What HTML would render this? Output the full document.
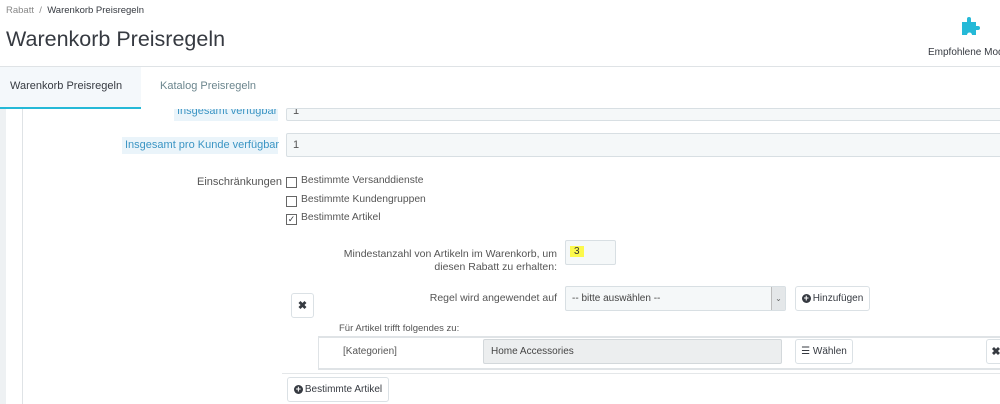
<!DOCTYPE html>
<html><head><meta charset="utf-8"><style>
*{box-sizing:border-box;margin:0;padding:0}
body{width:1000px;height:404px;overflow:hidden;background:#fff;font-family:"Liberation Sans",sans-serif;color:#363a41;position:relative}
.a{position:absolute;white-space:nowrap}
.inp{position:absolute;background:#f5f8f9;border:1px solid #d8dfe3;border-radius:2px;font-size:11px;padding-left:6px;color:#555}
.btn{position:absolute;background:#fff;border:1px solid #dbe1e5;border-radius:3px;font-size:10px;color:#363a41;display:flex;align-items:center;justify-content:center}
.cb{position:absolute;width:11px;height:11px;border:1px solid #666;background:#fff}
.lbl{font-size:10px;color:#555}
.plus{display:inline-block;width:9px;height:9px;border-radius:50%;background:#363a41;color:#fff;font-size:9px;line-height:9px;text-align:center;font-weight:bold;margin-right:2px}
</style></head><body>
<div class="a" style="left:6px;top:5px;font-size:9.5px;color:#888">Rabatt&nbsp; / &nbsp;<span style="color:#363a41">Warenkorb Preisregeln</span></div>
<div class="a" style="left:6px;top:27px;font-size:21.5px;color:#363a41">Warenkorb Preisregeln</div>
<svg class="a" style="left:960px;top:16px" width="22" height="22" viewBox="0 0 22 22"><path d="M2 6h5V3a2 2 0 0 1 4 0v3h5v4h2a2 2 0 0 1 0 4h-2v5h-4a2.5 2.5 0 0 0-5 0H2z" fill="#25b9d7"/></svg>
<div class="a" style="left:928px;top:47px;font-size:10px;color:#363a41">Empfohlene Mod</div>
<div class="a" style="left:0;top:66px;width:1000px;height:1px;background:#dfe3e6"></div>
<div class="a" style="left:0;top:67px;width:141px;height:42px;background:#f4f8fb;border-bottom:2px solid #25b9d7"></div>
<div class="a" style="left:10px;top:80px;font-size:11px;color:#363a41">Warenkorb Preisregeln</div>
<div class="a" style="left:160px;top:80px;font-size:11px;color:#6c868e">Katalog Preisregeln</div>
<div class="a" style="left:0;top:109px;width:6px;height:295px;background:#eef1f3"></div>
<div class="a" style="left:22px;top:109px;width:1px;height:295px;background:#dfe3e6"></div>
<div class="a" style="left:174px;top:109px;width:104px;height:12px;background:#eaf4fa;font-size:11px;color:#3b95c4;padding-left:3px;line-height:4px;overflow:hidden">Insgesamt verfügbar</div>
<div class="inp" style="left:286px;top:108px;width:720px;height:13px;line-height:4px;overflow:hidden">1</div>
<div class="a" style="left:122px;top:137px;width:156px;height:17px;background:#eaf4fa;font-size:11px;color:#3b95c4;line-height:17px;padding-left:3px">Insgesamt pro Kunde verfügbar</div>
<div class="inp" style="left:286px;top:133px;width:720px;height:24px;line-height:22px">1</div>
<div class="a" style="left:197px;top:176px;font-size:11px;color:#555">Einschränkungen</div>
<div class="cb" style="left:286px;top:177px"></div><div class="a lbl" style="left:301px;top:175px;font-size:10.3px">Bestimmte Versanddienste</div>
<div class="cb" style="left:286px;top:196px"></div><div class="a lbl" style="left:301px;top:194px;font-size:10.3px">Bestimmte Kundengruppen</div>
<div class="cb" style="left:286px;top:214px;font-size:9px;line-height:9px;text-align:center">✓</div><div class="a lbl" style="left:301px;top:212px;font-size:10.3px">Bestimmte Artikel</div>
<div class="a lbl" style="left:300px;top:248px;width:257px;text-align:right;line-height:13px;font-size:10.5px">Mindestanzahl von Artikeln im Warenkorb, um<br>diesen Rabatt zu erhalten:</div>
<div class="inp" style="left:565px;top:240px;width:51px;height:25px"><span style="position:absolute;left:4px;top:5px;background:#fcf94c;padding:0 4px;font-size:10px;color:#333">3</span></div>
<div class="btn" style="left:291px;top:293px;width:23px;height:25px;font-size:11px;font-weight:bold">✖</div>
<div class="a lbl" style="left:400px;top:292px;width:157px;text-align:right;font-size:10.5px">Regel wird angewendet auf</div>
<div class="inp" style="left:565px;top:286px;width:221px;height:25px;line-height:23px;font-size:10px;color:#444">-- bitte auswählen --<div style="position:absolute;right:0;top:0;width:14px;height:23px;background:#e4e7e9;border-left:1px solid #bbb;font-size:8px;text-align:center;color:#666">⌄</div></div>
<div class="btn" style="left:795px;top:286px;width:75px;height:25px"><span class="plus">+</span>Hinzufügen</div>
<div class="a lbl" style="left:339px;top:323px;font-size:9.5px">Für Artikel trifft folgendes zu:</div>
<div class="a" style="left:318px;top:336px;width:690px;height:34px;border:1px solid #dfe3e6;border-width:2px 0 2px 1px"></div>
<div class="a lbl" style="left:343px;top:346px">[Kategorien]</div>
<div class="a" style="left:483px;top:339px;width:299px;height:25px;background:#eceeef;border:1px solid #d3d8db;border-radius:2px;font-size:10px;color:#444;line-height:23px;padding-left:7px">Home Accessories</div>
<div class="btn" style="left:795px;top:339px;width:58px;height:25px">☰ Wählen</div>
<div class="btn" style="left:986px;top:339px;width:20px;height:25px;font-size:11px;font-weight:bold">✖</div>
<div class="a" style="left:282px;top:373px;width:718px;height:1px;background:#e4e7e9"></div>
<div class="btn" style="left:287px;top:377px;width:102px;height:25px"><span class="plus">+</span>Bestimmte Artikel</div>
</body></html>
